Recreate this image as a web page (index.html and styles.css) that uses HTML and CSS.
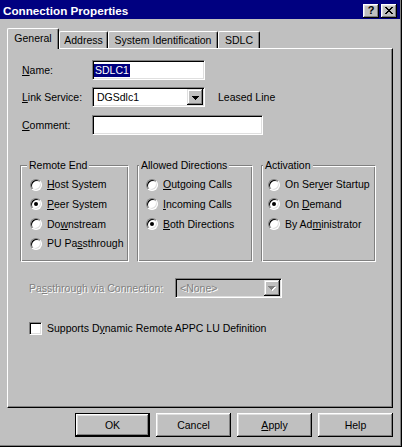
FILE: index.html
```html
<!DOCTYPE html>
<html>
<head>
<meta charset="utf-8">
<title>Connection Properties</title>
<link rel="stylesheet" href="styles.css">
</head>
<body>
<div class="window">
  <div class="frame">
    <div class="titlebar">
      <span class="title">Connection Properties</span>
      <div class="caption-btns">
        <span class="cbtn cbtn-help">?</span>
        <span class="cbtn cbtn-close"><svg width="8" height="7" viewBox="0 0 8 7"><path d="M0 0h2v1H0zM6 0h2v1H6zM1 1h2v1H1zM5 1h2v1H5zM2 2h4v1H2zM3 3h2v1H3zM2 4h4v1H2zM1 5h2v1H1zM5 5h2v1H5zM0 6h2v1H0zM6 6h2v1H6z" fill="#000"/></svg></span>
      </div>
    </div>
    <div class="client">
      <div class="tabs">
        <div class="tab tab-active tab-general">General</div>
        <div class="tab tab-address">Address</div>
        <div class="tab tab-sysid">System Identification</div>
        <div class="tab tab-sdlc">SDLC</div>
      </div>
      <div class="panel">
        <div class="form-row row-name">
          <span class="lbl"><u>N</u>ame:</span>
          <div class="edit edit-name"><span class="selection">SDLC1</span></div>
        </div>
        <div class="form-row row-link">
          <span class="lbl"><u>L</u>ink Service:</span>
          <div class="combo combo-link">
            <span class="combo-text">DGSdlc1</span>
            <span class="drop"><svg width="7" height="4" viewBox="0 0 7 4"><path d="M0 0h7v1H6v1H5v1H4v1H3V3H2V2H1V1H0z" fill="#000"/></svg></span>
          </div>
          <span class="note">Leased Line</span>
        </div>
        <div class="form-row row-comment">
          <span class="lbl"><u>C</u>omment:</span>
          <div class="edit edit-comment"></div>
        </div>

        <div class="groups">
          <div class="group group-remote">
            <span class="group-title">Remote End</span>
            <div class="options">
              <div class="opt"><span class="radio"></span><span><u>H</u>ost System</span></div>
              <div class="opt"><span class="radio radio-on"></span><span><u>P</u>eer System</span></div>
              <div class="opt"><span class="radio"></span><span>Do<u>w</u>nstream</span></div>
              <div class="opt"><span class="radio"></span><span>PU Pa<u>s</u>sthrough</span></div>
            </div>
          </div>
          <div class="group group-dirs">
            <span class="group-title">Allowed Directions</span>
            <div class="options">
              <div class="opt"><span class="radio"></span><span><u>O</u>utgoing Calls</span></div>
              <div class="opt"><span class="radio"></span><span><u>I</u>ncoming Calls</span></div>
              <div class="opt"><span class="radio radio-on"></span><span><u>B</u>oth Directions</span></div>
            </div>
          </div>
          <div class="group group-act">
            <span class="group-title">Activation</span>
            <div class="options">
              <div class="opt"><span class="radio"></span><span>On Ser<u>v</u>er Startup</span></div>
              <div class="opt"><span class="radio radio-on"></span><span>On <u>D</u>emand</span></div>
              <div class="opt"><span class="radio"></span><span>By Ad<u>m</u>inistrator</span></div>
            </div>
          </div>
        </div>

        <div class="form-row row-pass">
          <span class="lbl-pass disabled">Pa<u>s</u>sthrough via Connection:</span>
          <div class="combo combo-pass">
            <span class="combo-text disabled">&lt;None&gt;</span>
            <span class="drop"><svg width="8" height="5" viewBox="0 0 8 5"><path d="M1 1h7v1H7v1H6v1H5v1H4V4H3V3H2V2H1z" fill="#fff"/><path d="M0 0h7v1H6v1H5v1H4v1H3V3H2V2H1V1H0z" fill="#808080"/></svg></span>
          </div>
        </div>

        <div class="check-row">
          <span class="check"></span>
          <span>Supports D<u>y</u>namic Remote APPC LU Definition</span>
        </div>
      </div>

      <div class="buttons">
        <div class="btn btn-default">OK</div>
        <div class="btn">Cancel</div>
        <div class="btn"><span><u>A</u>pply</span></div>
        <div class="btn">Help</div>
      </div>
    </div>
  </div>
</div>
</body>
</html>
```

FILE: styles.css
```css
html, body {
  margin: 0;
  padding: 0;
  background: #c0c0c0;
}

body {
  font-family: "Liberation Sans", Arial, sans-serif;
  font-size: 10.5px;
  line-height: 13px;
  color: #000;
}

u {
  text-decoration: underline;
  text-underline-offset: 1px;
}

.window {
  width: 402px;
  height: 447px;
  box-sizing: border-box;
  border-right: 1px solid #000;
  border-bottom: 1px solid #000;
  background: #c0c0c0;
}

.frame {
  height: 100%;
  box-sizing: border-box;
  border-right: 1px solid #808080;
  border-bottom: 1px solid #808080;
  display: flex;
  flex-direction: column;
}

/* Title bar */
.titlebar {
  height: 19px;
  flex: none;
  background: #000080;
  display: flex;
  align-items: flex-start;
  padding: 0 3px 0 3px;
}

.title {
  color: #fff;
  font-weight: bold;
  font-size: 11.7px;
  line-height: 14px;
  margin-top: 4px;
  white-space: nowrap;
}

.caption-btns {
  margin-left: auto;
  margin-top: 4px;
  display: flex;
  gap: 2px;
}

.cbtn {
  width: 16px;
  height: 14px;
  box-sizing: border-box;
  background: #c0c0c0;
  box-shadow: inset -1px -1px #000, inset 1px 1px #fff, inset -2px -2px #808080, inset 2px 2px #dfdfdf;
  display: flex;
  align-items: center;
  justify-content: center;
}

.cbtn-help {
  font-weight: bold;
  font-size: 11px;
  line-height: 11px;
  padding-bottom: 1px;
}

.cbtn-close svg {
  display: block;
  margin-bottom: 1px;
}

/* Client area */
.client {
  flex: 1;
  padding: 9px 0 0 7px;
  display: flex;
  flex-direction: column;
}

.tabs {
  height: 20px;
  display: flex;
  align-items: flex-end;
  flex: none;
}

.tab {
  box-sizing: border-box;
  height: 17px;
  border-top: 1px solid #fff;
  border-left: 1px solid #fff;
  border-right: 1px solid #000;
  border-radius: 2px 2px 0 0;
  box-shadow: inset -1px 0 #808080;
  text-align: center;
  padding-top: 2px;
  white-space: nowrap;
}

.tab-active {
  position: relative;
  z-index: 1;
  height: 21px;
  margin-bottom: -1px;
  padding-top: 3px;
  background: #c0c0c0;
}

.tab-general { width: 52px; }
.tab-address { width: 49px; }
.tab-sysid { width: 110px; }
.tab-sdlc { width: 42px; }

.panel {
  width: 386px;
  height: 360px;
  box-sizing: border-box;
  flex: none;
  border-top: 1px solid #fff;
  border-left: 1px solid #fff;
  border-right: 1px solid #000;
  border-bottom: 1px solid #000;
  box-shadow: inset -1px -1px #808080;
  padding: 11px 0 0 12px;
  display: flex;
  flex-direction: column;
}

/* form rows */
.form-row {
  display: flex;
  align-items: center;
  padding-left: 2px;
}

.row-link { margin-top: 7px; }
.row-comment { margin-top: 8px; }

.lbl {
  width: 70px;
  flex: none;
  white-space: nowrap;
}

.edit,
.combo {
  box-sizing: border-box;
  height: 20px;
  background: #fff;
  border: 1px solid;
  border-color: #808080 #fff #fff #808080;
  box-shadow: inset 1px 1px #000, inset -1px -1px #dfdfdf;
  display: flex;
  align-items: center;
  flex: none;
}

.edit { padding-left: 1px; }
.edit-name { width: 113px; }
.edit-comment { width: 171px; }

.selection {
  background: #000080;
  color: #fff;
  padding: 0 1px;
  line-height: 13px;
}

.combo { padding: 1px; }
.combo-link { width: 113px; }

.combo-text {
  flex: 1;
  padding-left: 3px;
  white-space: nowrap;
}

.drop {
  width: 16px;
  height: 16px;
  box-sizing: border-box;
  background: #c0c0c0;
  box-shadow: inset -1px -1px #000, inset 1px 1px #dfdfdf, inset -2px -2px #808080, inset 2px 2px #fff;
  display: flex;
  align-items: center;
  justify-content: center;
  flex: none;
}

.drop svg {
  display: block;
  margin-top: 1px;
}

.note {
  margin-left: 13px;
  white-space: nowrap;
}

/* group boxes */
.groups {
  margin-top: 30px;
  display: flex;
  gap: 8px;
}

.group {
  box-sizing: border-box;
  height: 97px;
  border-top: 1px solid #808080;
  border-left: 1px solid #808080;
  border-right: 1px solid #fff;
  border-bottom: 1px solid #fff;
  box-shadow: inset 1px 1px #fff, inset -1px -1px #808080;
  display: flex;
  flex-direction: column;
}

.group-remote { width: 109px; padding-left: 9px; }
.group-dirs { width: 116px; padding-left: 8px; }
.group-act { width: 115px; padding-left: 6px; }

.group-title {
  align-self: flex-start;
  margin-top: -7px;
  background: #c0c0c0;
  padding: 0 2px;
  white-space: nowrap;
}

.group-remote .group-title { margin-left: -3px; }
.group-dirs .group-title { margin-left: -7px; }
.group-act .group-title { margin-left: -5px; }

.options {
  margin-top: 3px;
  display: flex;
  flex-direction: column;
}

.opt {
  height: 19.67px;
  display: flex;
  align-items: center;
  gap: 5px;
  white-space: nowrap;
}

.radio {
  width: 12px;
  height: 12px;
  box-sizing: border-box;
  border-radius: 50%;
  background: #fff;
  border: 1px solid;
  border-color: #808080 #fff #fff #808080;
  box-shadow: inset 1px 1px #000, inset -1px -1px #dfdfdf;
  flex: none;
  display: flex;
  align-items: center;
  justify-content: center;
}

.radio-on::after {
  content: "";
  width: 4px;
  height: 4px;
  border-radius: 50%;
  background: #000;
}

/* passthrough */
.row-pass {
  margin-top: 16px;
  padding-left: 9px;
}

.lbl-pass {
  width: 146px;
  flex: none;
  white-space: nowrap;
}

.disabled {
  color: #808080;
  text-shadow: 1px 1px 0 #fff;
}

.combo-pass {
  width: 107px;
  background: #c0c0c0;
}

/* checkbox */
.check-row {
  margin-top: 24px;
  padding-left: 9px;
  display: flex;
  align-items: center;
  gap: 5px;
  white-space: nowrap;
}

.check {
  width: 13px;
  height: 13px;
  box-sizing: border-box;
  background: #fff;
  border: 1px solid;
  border-color: #808080 #fff #fff #808080;
  box-shadow: inset 1px 1px #000, inset -1px -1px #dfdfdf;
  flex: none;
}

/* buttons */
.buttons {
  width: 386px;
  margin-top: 5px;
  display: flex;
  justify-content: flex-end;
  gap: 6px;
}

.btn {
  width: 75px;
  height: 24px;
  box-sizing: border-box;
  background: #c0c0c0;
  box-shadow: inset -1px -1px #000, inset 1px 1px #fff, inset -2px -2px #808080, inset 2px 2px #dfdfdf;
  display: flex;
  align-items: center;
  justify-content: center;
}

.btn-default {
  border: 1px solid #000;
}
```
